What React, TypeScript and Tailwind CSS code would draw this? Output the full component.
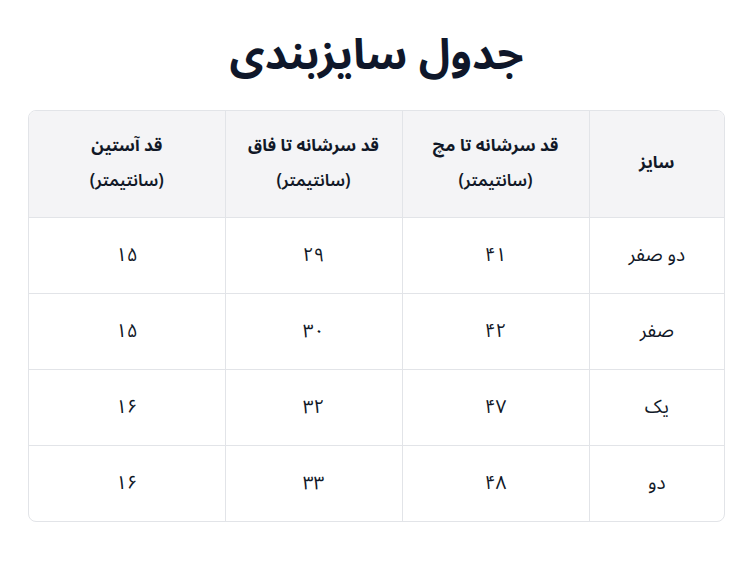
const headers = [
  { title: "سایز", unit: "", w: "w-[135px]" },
  { title: "قد سرشانه تا مچ", unit: "(سانتیمتر)", w: "w-[187px]" },
  { title: "قد سرشانه تا فاق", unit: "(سانتیمتر)", w: "w-[177px]" },
  { title: "قد آستین", unit: "(سانتیمتر)", w: "" },
]

const rows = [
  ["دو صفر", "۴۱", "۲۹", "۱۵"],
  ["صفر", "۴۲", "۳۰", "۱۵"],
  ["یک", "۴۷", "۳۲", "۱۶"],
  ["دو", "۴۸", "۳۳", "۱۶"],
]

export default function App() {
  return (
    <div
      dir="rtl"
      className="min-h-screen bg-white pl-7 pr-[25px] pt-[28px] text-[#111827]"
      style={{ fontFamily: '"Noto Sans Arabic", "Vazirmatn", "DejaVu Sans", "Noto Sans", sans-serif' }}
    >
      <h1 className="text-center text-[43px] font-bold leading-[56px] text-[#0f172a]">جدول سایزبندی</h1>

      <div className="mt-[26px] overflow-hidden rounded-lg border border-[#e2e4e8]">
        <table className="w-full table-fixed border-collapse">
          <thead>
            <tr className="bg-[#f4f4f6]">
              {headers.map((h, i) => (
                <th
                  key={i}
                  className={`${h.w} h-[106px] border-b border-[#e2e4e8] px-3 text-center text-[17px] font-bold leading-[35px] ${
                    i < headers.length - 1 ? "border-l" : ""
                  }`}
                >
                  <div>{h.title}</div>
                  {h.unit && <div className="font-semibold">{h.unit}</div>}
                </th>
              ))}
            </tr>
          </thead>
          <tbody>
            {rows.map((r, ri) => (
              <tr key={ri}>
                {r.map((c, ci) => (
                  <td
                    key={ci}
                    className={`h-[76px] text-center text-[19px] ${ri < rows.length - 1 ? "border-b" : ""} ${
                      ci < r.length - 1 ? "border-l" : ""
                    } border-[#e2e4e8]`}
                  >
                    {c}
                  </td>
                ))}
              </tr>
            ))}
          </tbody>
        </table>
      </div>
    </div>
  )
}
